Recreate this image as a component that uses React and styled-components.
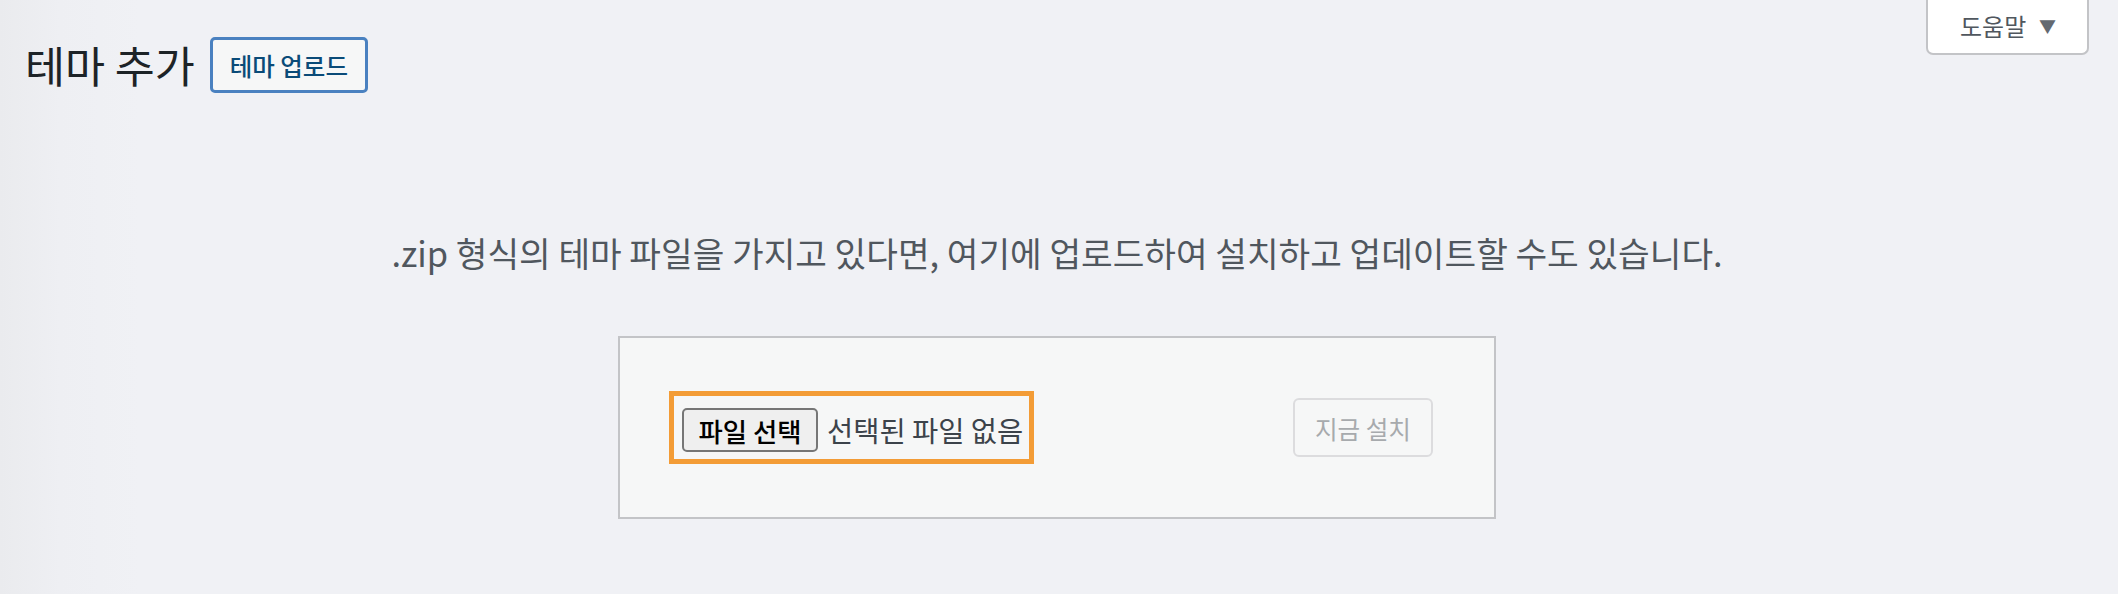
import React from 'react'
import styled, {createGlobalStyle} from 'styled-components';

const GlobalStyle = createGlobalStyle`
    html, body {
        margin: 0;
        padding: 0;
    }

    body {
        background: linear-gradient(to right, #eaebee 0, #eeeff3 60px, #f0f1f5 140px);
        font-family: "Noto Sans CJK KR", "Noto Sans", sans-serif;
        min-height: 594px;
    }
`

const App = () => {
    return (
        <Page>
            <GlobalStyle />
            <HelpTab>
                도움말 <Caret>▼</Caret>
            </HelpTab>

            <TitleRow>
                <Title>테마 추가</Title>
                <UploadToggle>테마 업로드</UploadToggle>
            </TitleRow>

            <InstallHelp>
                .zip 형식의 테마 파일을 가지고 있다면, 여기에 업로드하여 설치하고 업데이트할 수도 있습니다.
            </InstallHelp>

            <UploadForm>
                <FileField>
                    <FileButton>파일 선택</FileButton>
                    <FileName>선택된 파일 없음</FileName>
                </FileField>
                <InstallButton disabled>지금 설치</InstallButton>
            </UploadForm>
        </Page>
    )
}

export default App;

const Page = styled.div`
    position: relative;
    box-sizing: border-box;
    width: 2118px;
    height: 594px;
    padding: 37px 29px 0 25px;
`

// screen-meta tab, hangs from the top edge over the page
const HelpTab = styled.div`
    position: absolute;
    top: 0;
    right: 29px;
    box-sizing: border-box;
    width: 163px;
    height: 55px;
    display: flex;
    align-items: center;
    justify-content: space-between;
    padding: 0 31px 2px 32px;
    background: #ffffff;
    border: 2px solid #c3c4c7;
    border-top: none;
    border-radius: 0 0 7px 7px;
    color: #50575e;
    font-size: 24px;
`

const Caret = styled.span`
    font-size: 17px;
    color: #646970;
`

const TitleRow = styled.div`
    display: flex;
    align-items: center;
    gap: 15px;
`

const Title = styled.h1`
    margin: 0;
    font-size: 43.5px;
    font-weight: 400;
    line-height: 56px;
    color: #1d2327;
`

const UploadToggle = styled.button`
    box-sizing: border-box;
    height: 56px;
    width: 158px;
    padding: 0;
    background: #f6f7f7;
    border: 3px solid #4a81c0;
    border-radius: 5px;
    color: #0a4b78;
    font-family: inherit;
    font-size: 24.5px;
    font-weight: 500;
`

const InstallHelp = styled.p`
    margin: 135px 0 0;
    text-align: center;
    font-size: 34.4px;
    line-height: 48px;
    color: #50575e;
`

const UploadForm = styled.div`
    box-sizing: border-box;
    width: 878px;
    height: 183px;
    margin: 60px auto 0;
    padding: 0 61px 0 49px;
    display: flex;
    align-items: center;
    justify-content: space-between;
    background: #f6f7f7;
    border: 2px solid #c3c4c7;
`

const FileField = styled.div`
    display: flex;
    align-items: center;
    gap: 9px;
    padding: 12px 6px 7px 8px;
    border: 5px solid #f39c36;
`

const FileButton = styled.button`
    box-sizing: border-box;
    width: 136px;
    height: 44px;
    padding: 0;
    background: #efefef;
    border: 2px solid #767676;
    border-radius: 5px;
    color: #000000;
    font-family: inherit;
    font-size: 26.4px;
    font-weight: 500;
`

const FileName = styled.span`
    font-size: 28.5px;
    line-height: 44px;
    color: #3c434a;
`

const InstallButton = styled.button`
    box-sizing: border-box;
    width: 140px;
    height: 59px;
    padding: 0;
    background: #f6f7f7;
    border: 2px solid #dcdcde;
    border-radius: 6px;
    color: #a7aaad;
    font-family: inherit;
    font-size: 24.6px;
`
